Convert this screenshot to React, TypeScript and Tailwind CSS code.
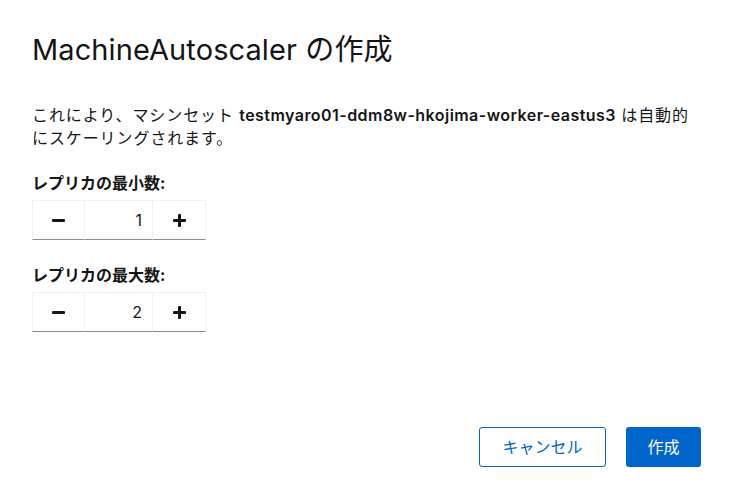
const MinusIcon = () => (
  <svg width="13" height="13" viewBox="0 0 13 13" aria-hidden="true">
    <rect x="0" y="5" width="13" height="3" rx="1" fill="#151515" />
  </svg>
);

const PlusIcon = () => (
  <svg width="13" height="13" viewBox="0 0 13 13" aria-hidden="true">
    <rect x="0" y="5" width="13" height="3" rx="1" fill="#151515" />
    <rect x="5" y="0" width="3" height="13" rx="1" fill="#151515" />
  </svg>
);

interface NumberFieldProps {
  label: string;
  value: number;
}

const NumberField = ({ label, value }: NumberFieldProps) => (
  <div>
    <p className="text-[16px] font-bold leading-[24px] text-[#151515]">{label}</p>
    <div className="mt-[5px] flex h-[40px] w-[174px]">
      <button
        type="button"
        className="flex w-[53px] items-center justify-center border border-[#f0f0f0] border-b-[#8a8d90]"
      >
        <MinusIcon />
      </button>
      <div className="flex w-[67px] items-center justify-end border-y border-[#f0f0f0] border-b-[#8a8d90] pr-[10px] text-[16px] text-[#151515]">
        {value}
      </div>
      <button
        type="button"
        className="flex w-[54px] items-center justify-center border border-[#f0f0f0] border-b-[#8a8d90]"
      >
        <PlusIcon />
      </button>
    </div>
  </div>
);

export default function App() {
  return (
    <div
      className="flex h-[497px] w-[736px] flex-col bg-white px-[32px] pb-[30px] pt-[28px] text-[#151515]"
      style={{ fontFamily: 'Inter, "Noto Sans CJK JP", sans-serif' }}
    >
      <h1 className="text-[29px] font-normal leading-[44px] tracking-[0.1px]">MachineAutoscaler の作成</h1>

      <p className="mt-[32px] text-[16px] leading-[23px] tracking-[0.9px]">
        これにより、マシンセット{" "}
        <span className="font-semibold tracking-[0.45px]">testmyaro01-ddm8w-hkojima-worker-eastus3</span> は自動的
        <br />
        にスケーリングされます。
      </p>

      <div className="mt-[21px] flex flex-col gap-[23px]">
        <NumberField label="レプリカの最小数:" value={1} />
        <NumberField label="レプリカの最大数:" value={2} />
      </div>

      <div className="mt-auto flex justify-end gap-[20px] pr-[3px]">
        <button
          type="button"
          className="h-[40px] w-[127px] rounded-[3px] border border-[#0066cc] text-[16px] text-[#0066cc]"
        >
          キャンセル
        </button>
        <button type="button" className="h-[40px] w-[75px] rounded-[3px] bg-[#0066cc] text-[16px] text-white">
          作成
        </button>
      </div>
    </div>
  );
}
